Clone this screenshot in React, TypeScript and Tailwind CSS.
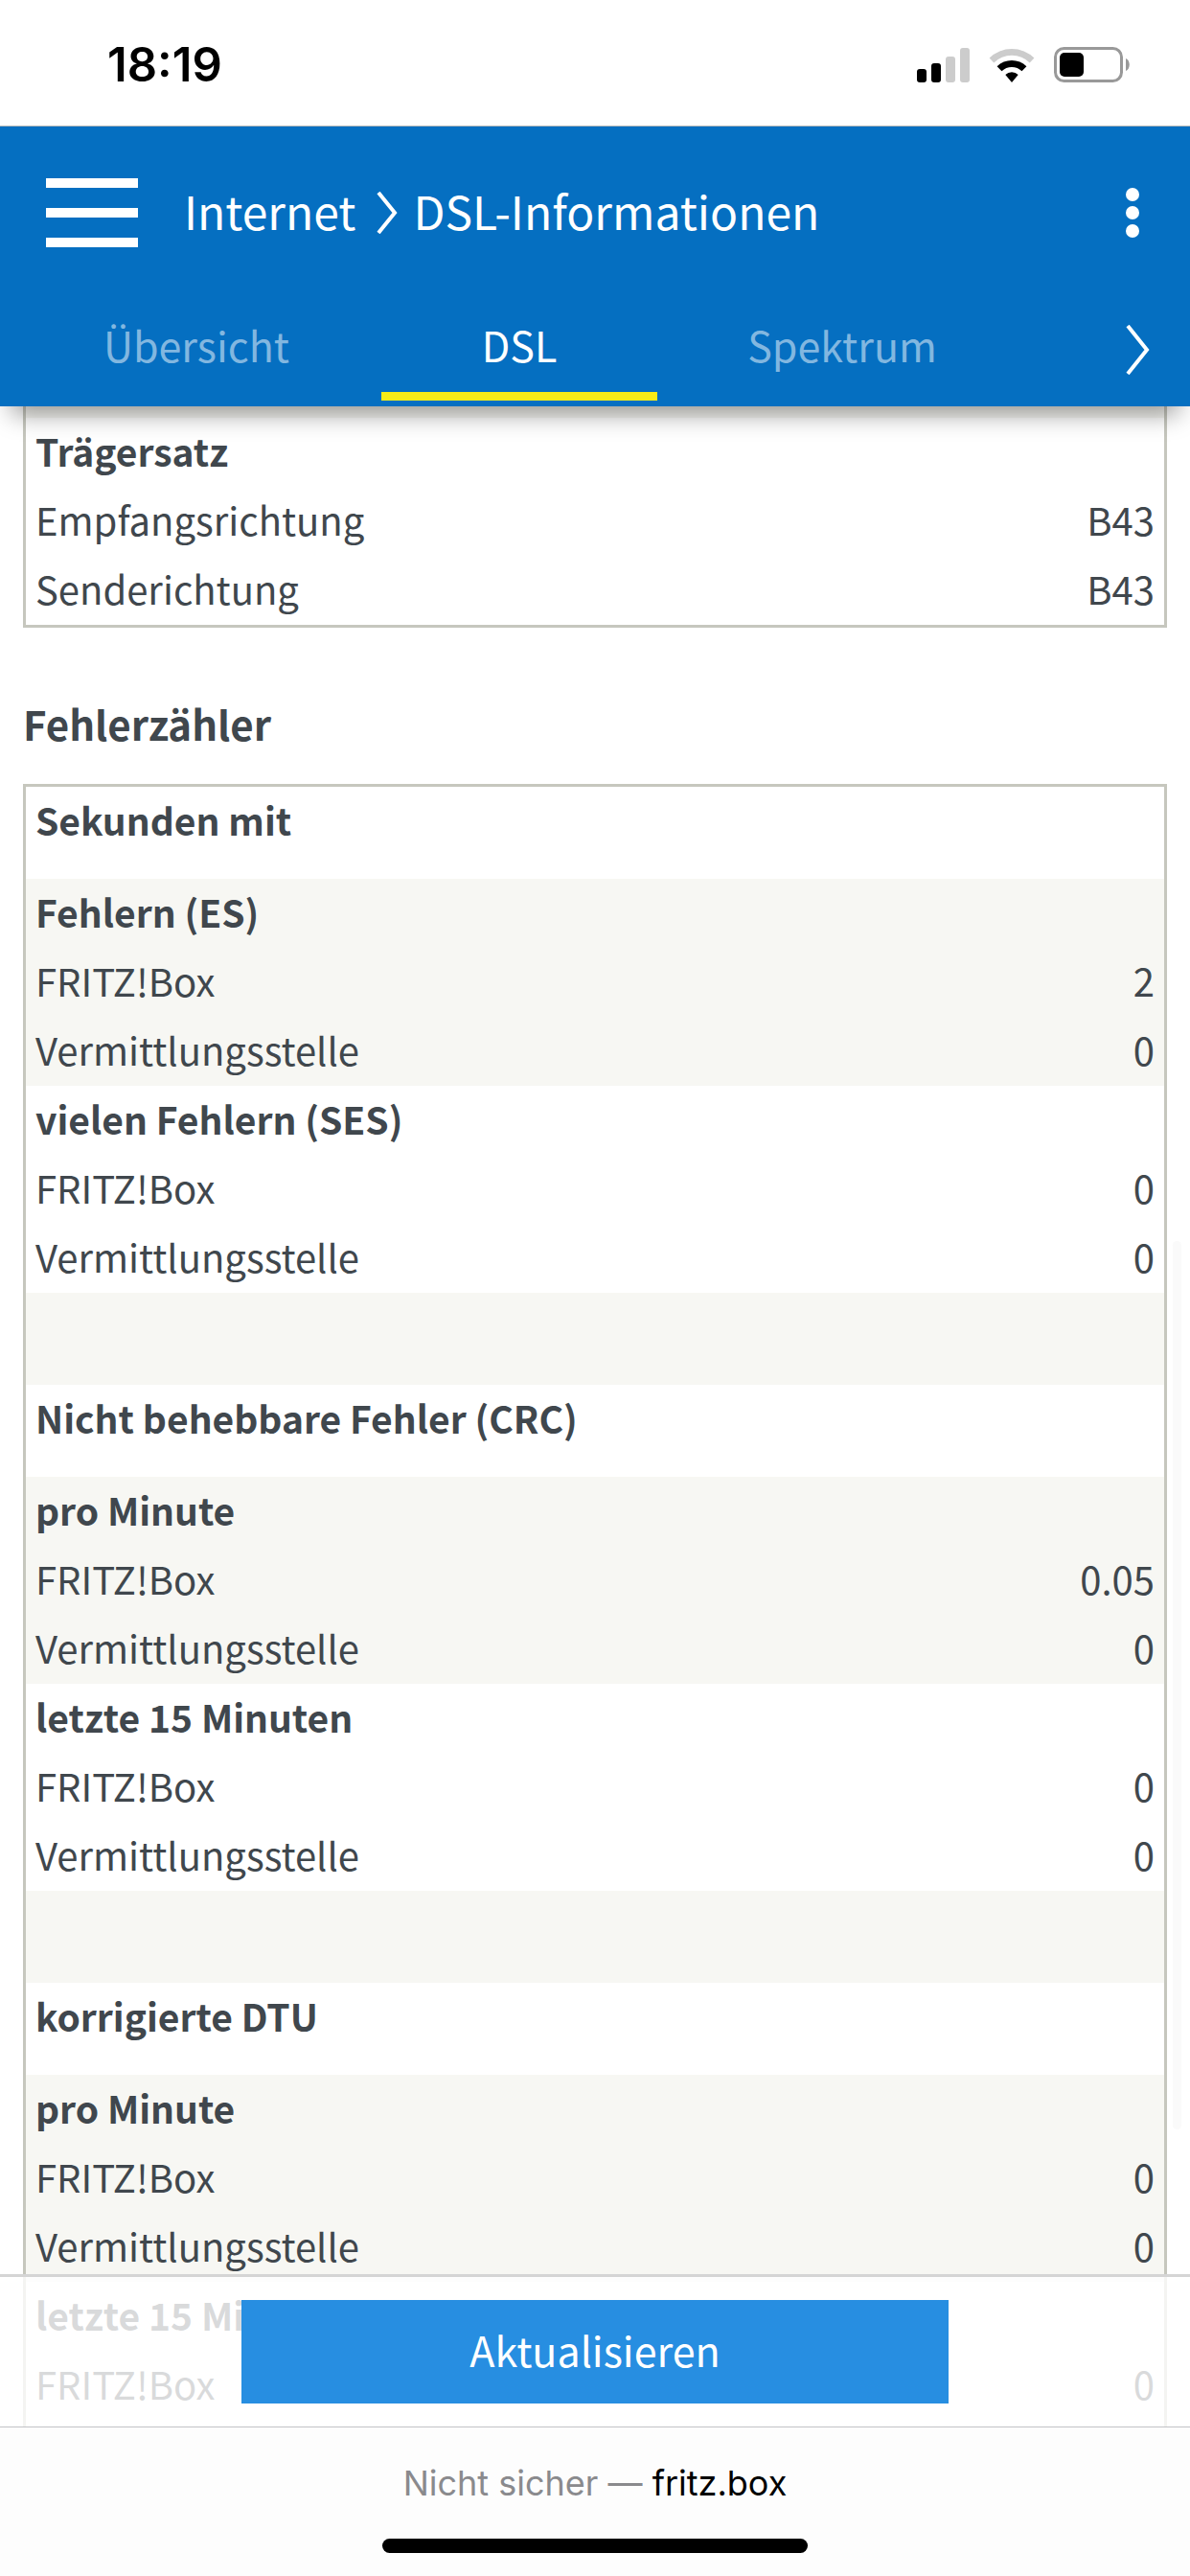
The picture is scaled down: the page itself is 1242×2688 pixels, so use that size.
import { Fragment } from 'react'
import clsx from 'clsx'

type Group = {
  title?: string
  size: 'normal' | 'tall'
  shaded?: boolean
  rows?: [string, string][]
}

const tabs = ['Übersicht', 'DSL', 'Spektrum']
const activeTab = 'DSL'

const carrierSet: Group[] = [
  {
    title: 'Trägersatz',
    size: 'normal',
    rows: [
      ['Empfangsrichtung', 'B43'],
      ['Senderichtung', 'B43'],
    ],
  },
]

const errorCounters: Group[] = [
  { title: 'Sekunden mit', size: 'tall' },
  { title: 'Fehlern (ES)', size: 'normal', shaded: true, rows: [['FRITZ!Box', '2'], ['Vermittlungsstelle', '0']] },
  { title: 'vielen Fehlern (SES)', size: 'normal', rows: [['FRITZ!Box', '0'], ['Vermittlungsstelle', '0']] },
  { size: 'tall', shaded: true },
  { title: 'Nicht behebbare Fehler (CRC)', size: 'tall' },
  { title: 'pro Minute', size: 'normal', shaded: true, rows: [['FRITZ!Box', '0.05'], ['Vermittlungsstelle', '0']] },
  { title: 'letzte 15 Minuten', size: 'normal', rows: [['FRITZ!Box', '0'], ['Vermittlungsstelle', '0']] },
  { size: 'tall', shaded: true },
  { title: 'korrigierte DTU', size: 'tall' },
  { title: 'pro Minute', size: 'normal', shaded: true, rows: [['FRITZ!Box', '0'], ['Vermittlungsstelle', '0']] },
  { title: 'letzte 15 Minuten', size: 'normal', rows: [['FRITZ!Box', '0']] },
]

function StatusBar() {
  return (
    <div className="flex h-[132px] shrink-0 items-center justify-between border-b border-[#b4b8ba] pl-28 pr-[63px] pt-1 font-['Inter',sans-serif]">
      <span className="text-[49px] font-semibold text-black">18:19</span>
      <div className="flex items-center gap-5" aria-hidden="true">
        <svg width="55" height="36" viewBox="0 0 55 36">
          <rect x="0" y="22" width="10" height="14" rx="3" fill="#000" />
          <rect x="15" y="16" width="10" height="20" rx="3" fill="#000" />
          <rect x="30" y="9" width="10" height="27" rx="3" fill="#ccc" />
          <rect x="45" y="0" width="10" height="36" rx="3" fill="#ccc" />
        </svg>
        <svg width="48" height="36" viewBox="0 0 48 36">
          <path d="M0.6 10.6a33.4 33.4 0 0 1 46.8 0l-4.7 4.8a26.6 26.6 0 0 0-37.4 0z" fill="#ccc" />
          <path d="M8.6 19.2a22 22 0 0 1 30.8 0l-4.9 5a15 15 0 0 0-21 0z" fill="#000" />
          <path d="M17.3 28a9.8 9.8 0 0 1 13.4 0L24 36z" fill="#000" />
        </svg>
        <svg width="79" height="37" viewBox="0 0 79 37">
          <rect x="1.5" y="1.5" width="69" height="34" rx="9" fill="none" stroke="#999" strokeWidth="3" />
          <rect x="6" y="6" width="25" height="25" rx="5" fill="#000" />
          <path d="M75 12c5 2 5 11 0 13z" fill="#999" />
        </svg>
      </div>
    </div>
  )
}

function Header() {
  return (
    <header className="relative z-10 shrink-0 bg-[#056fc1] text-white shadow-[0_20px_24px_-12px_rgba(0,0,0,0.4)]">
      <div className="flex h-[180px] items-center pl-12 pr-[53px]">
        <button type="button" aria-label="Menü" className="flex w-24 flex-col gap-[21px]">
          <span className="h-2.5 w-full bg-white" />
          <span className="h-2.5 w-full bg-white" />
          <span className="h-2.5 w-full bg-white" />
        </button>
        <nav aria-label="Pfad" className="ml-12 flex flex-1 items-center text-[48px]">
          <a href="#internet" className="pb-1.5">Internet</a>
          <svg className="ml-[22px] mr-4" width="22" height="44" viewBox="0 0 22 44" fill="none" stroke="#fff" strokeWidth="4" aria-hidden="true">
            <path d="M2 1l17 21L2 43" />
          </svg>
          <a href="#dsl" className="pb-1.5">DSL-Informationen</a>
        </nav>
        <button type="button" aria-label="Weitere Optionen">
          <svg width="14" height="54" viewBox="0 0 14 54" fill="#fff">
            <circle cx="7" cy="8" r="7" />
            <circle cx="7" cy="27" r="7" />
            <circle cx="7" cy="46" r="7" />
          </svg>
        </button>
      </div>
      <div className="flex items-center justify-between pb-1.5 pl-[61px] pr-[41px]">
        <div role="tablist" className="flex gap-[49px]">
          {tabs.map((tab) => (
            <button
              key={tab}
              type="button"
              role="tab"
              aria-selected={tab === activeTab}
              className={clsx(
                'h-[106px] w-72 border-b-[9px] pb-0.5 text-[43px]',
                tab === activeTab ? 'border-[#f8ec17] text-white' : 'border-transparent text-[#82b7e0]'
              )}
            >
              {tab}
            </button>
          ))}
        </div>
        <button type="button" aria-label="Weitere Tabs">
          <svg width="26" height="52" viewBox="0 0 26 52" fill="none" stroke="#fff" strokeWidth="4">
            <path d="M2 1l20 25L2 51" />
          </svg>
        </button>
      </div>
    </header>
  )
}

function CounterTable({ label, groups }: { label: string; groups: Group[] }) {
  return (
    <table aria-label={label} className="w-full border-separate border-spacing-0 text-[40px] leading-[68px]">
      <tbody>
        {groups.map((group, i) => (
          <Fragment key={i}>
            <tr className={clsx('align-top', group.size === 'tall' ? 'h-24' : 'h-[72px]', group.shaded && 'bg-[#f7f7f3]')}>
              <th colSpan={2} className="px-2.5 pb-1 text-left text-[39px] font-semibold">
                {group.title}
              </th>
            </tr>
            {group.rows?.map(([name, value]) => (
              <tr key={name} className={clsx('h-[72px] align-top', group.shaded && 'bg-[#f7f7f3]')}>
                <td className="px-2.5 pb-1">{name}</td>
                <td className="px-2.5 pb-1 text-right">{value}</td>
              </tr>
            ))}
          </Fragment>
        ))}
      </tbody>
    </table>
  )
}

export default function App() {
  return (
    <div className="flex h-screen flex-col overflow-hidden bg-white font-['Noto_Sans_CJK_JP',sans-serif] text-[#40474d]">
      <StatusBar />
      <Header />

      <main className="relative min-h-0 flex-1 overflow-hidden">
        <div className="px-6">
          <section className="border-x-[3px] border-b-[3px] border-[#c6c7be]">
            <div className="h-3 bg-[#f7f7f3]" />
            <CounterTable label="Trägersatz" groups={carrierSet} />
          </section>

          <h2 className="pb-[31px] pt-[68px] text-[42px] font-semibold leading-[64px]">Fehlerzähler</h2>

          <section className="border-x-[3px] border-t-[3px] border-[#c6c7be] pb-20">
            <CounterTable label="Fehlerzähler" groups={errorCounters} />
          </section>
        </div>

        {/* Scroll thumb */}
        <div className="absolute right-[9px] top-[871px] h-[927px] w-[9px] rounded-full bg-[#fafafa]" />

        {/* Action bar over the scrolled content */}
        <div className="absolute inset-x-0 bottom-0 flex justify-center border-t-[3px] border-[#d5d5d5] bg-white/80 py-6">
          <button type="button" className="h-[108px] w-[738px] bg-[#278ee1] pb-1.5 text-[43px] text-white">
            Aktualisieren
          </button>
        </div>
      </main>

      <footer className="flex shrink-0 flex-col items-center border-t border-[#c2c2c6] bg-[#fdfdfd] pb-6 pt-8 font-['Inter',sans-serif]">
        <p className="text-[36px] leading-[52px] text-[#8a8a8d]">
          Nicht sicher — <span className="text-black">fritz.box</span>
        </p>
        <div className="mt-8 h-[15px] w-[444px] rounded-full bg-black" />
      </footer>
    </div>
  )
}
